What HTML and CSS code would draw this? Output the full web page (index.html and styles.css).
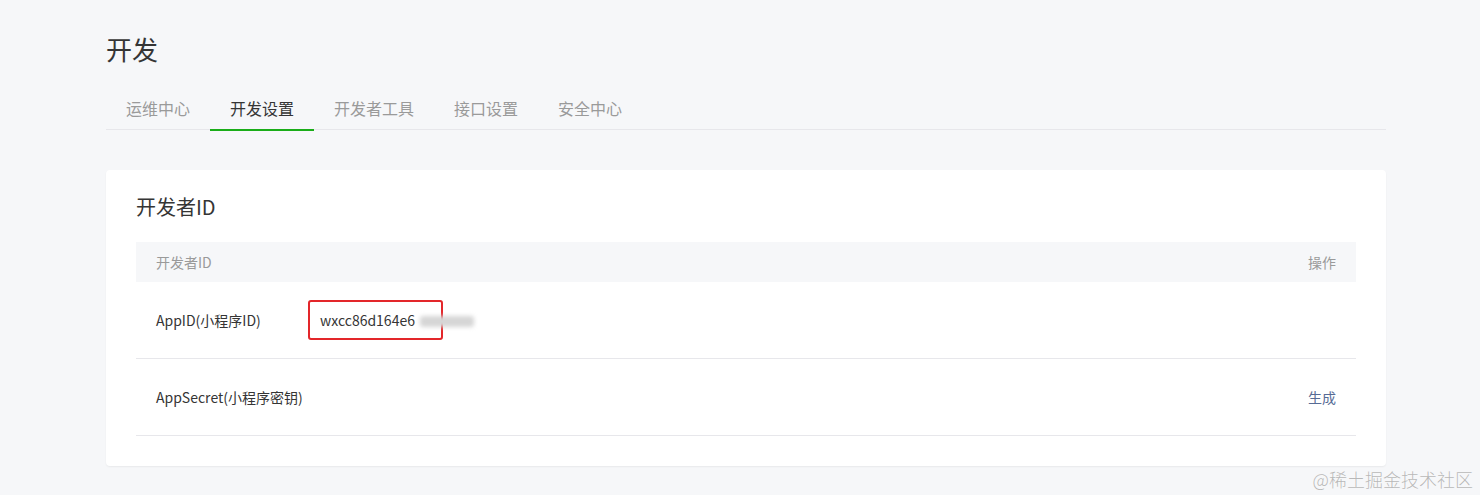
FILE: index.html
```html
<!DOCTYPE html>
<html lang="zh-CN">
<head>
<meta charset="utf-8">
<title>开发</title>
<link rel="stylesheet" href="styles.css">
</head>
<body>
<div class="page">
  <h1 class="page-title">开发</h1>
  <nav class="tabs">
    <a class="tab">运维中心</a>
    <a class="tab active">开发设置</a>
    <a class="tab">开发者工具</a>
    <a class="tab">接口设置</a>
    <a class="tab">安全中心</a>
  </nav>
  <section class="card">
    <h2 class="card-title">开发者ID</h2>
    <div class="table">
      <div class="thead">
        <span class="col-name">开发者ID</span>
        <span class="col-op">操作</span>
      </div>
      <div class="row">
        <span class="label">AppID(小程序ID)</span>
        <span class="value">
          <span class="highlight">wxcc86d164e6<span class="masked"></span></span>
        </span>
        <span class="op"></span>
      </div>
      <div class="row">
        <span class="label">AppSecret(小程序密钥)</span>
        <span class="value"></span>
        <a class="op link">生成</a>
      </div>
    </div>
  </section>
</div>
<div class="watermark">@稀土掘金技术社区</div>
</body>
</html>
```
FILE: styles.css
```css
* { box-sizing: border-box; }
html, body { margin: 0; padding: 0; }
body {
  background: #f6f7f9;
  font-family: "Noto Sans CJK SC", "Liberation Sans", sans-serif;
  color: #353535;
  height: 495px;
  overflow: hidden;
  position: relative;
}
.page {
  width: 1280px;
  margin-left: 106px;
  padding-top: 33px;
}
.page-title {
  margin: 0;
  font-size: 26px;
  font-weight: 400;
  line-height: 32px;
  height: 32px;
  color: #353535;
}
.tabs {
  display: flex;
  margin-top: 31px;
  border-bottom: 1px solid #e7e7eb;
  height: 34px;
}
.tab {
  padding: 0 20px;
  font-size: 16px;
  line-height: 24px;
  height: 34px;
  color: #9a9a9a;
  cursor: pointer;
}
.tab.active {
  color: #353535;
  border-bottom: 2px solid #1aad19;
  height: 35px;
  margin-bottom: -1px;
}
.card {
  margin-top: 40px;
  background: #fff;
  border-radius: 4px;
  box-shadow: 0 1px 2px rgba(0, 0, 0, 0.06);
  padding: 0 30px 30px;
}
.card-title {
  margin: 0;
  height: 72px;
  line-height: 74px;
  font-size: 20px;
  font-weight: 400;
  color: #353535;
}
.thead {
  display: flex;
  justify-content: space-between;
  align-items: center;
  height: 40px;
  padding: 0 20px;
  background: #f6f7f9;
  font-size: 14px;
  color: #9a9a9a;
}
.row {
  display: flex;
  align-items: center;
  height: 77px;
  padding: 0 20px;
  border-bottom: 1px solid #e7e7eb;
  font-size: 14px;
  color: #353535;
}
.row:first-of-type { height: 76px; }
.label { width: 152px; flex: none; }
.value { flex: 1; }
.op { flex: none; }
.link { color: #576b95; cursor: pointer; }
.highlight {
  position: relative;
  display: inline-flex;
  align-items: center;
  width: 135px;
  height: 40px;
  padding: 0 10px;
  border: 2px solid #e3262a;
  border-radius: 3px;
}
.masked {
  position: absolute;
  left: 110px;
  top: 14px;
  width: 54px;
  height: 11px;
  background: #d6d6d6;
  filter: blur(2px);
  border-radius: 3px;
}
.watermark {
  position: absolute;
  right: 7px;
  bottom: 4px;
  font-size: 18px;
  line-height: 24px;
  color: #b8b8b8;
  font-weight: 300;
  text-shadow: 0 0 1px #fff, 0 0 1px #fff;
}
```
